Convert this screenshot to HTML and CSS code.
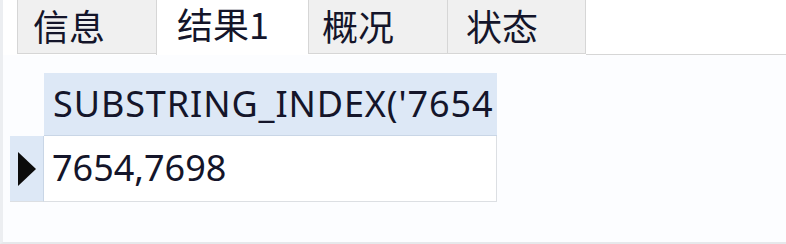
FILE: index.html
```html
<!DOCTYPE html>
<html>
<head>
<meta charset="utf-8">
<link rel="stylesheet" href="styles.css">
</head>
<body>
<div class="window">
  <div class="tabs">
    <div class="tab">信息</div>
    <div class="tab active">结果1</div>
    <div class="tab">概况</div>
    <div class="tab">状态</div>
    <div class="tab-fill"></div>
  </div>
  <div class="content">
    <div class="grid">
      <div class="corner"></div>
      <div class="head">SUBSTRING_INDEX('7654</div>
      <div class="indicator"><span class="arrow"></span></div>
      <div class="cell">7654,7698</div>
    </div>
  </div>
</div>
</body>
</html>
```
FILE: styles.css
```css
html, body {
  margin: 0;
  padding: 0;
  background: #ffffff;
}
.window {
  width: 786px;
  height: 244px;
  box-sizing: border-box;
  border-left: 3px solid #eceef1;
  border-bottom: 2px solid #e6e8eb;
  font-family: "Noto Sans", "Noto Sans CJK SC", sans-serif;
  color: #14152a;
}
.tabs {
  display: flex;
  height: 55px;
  padding-left: 14px;
  box-sizing: border-box;
}
.tab {
  width: 139px;
  height: 54px;
  box-sizing: border-box;
  background: #f0f0f0;
  border-left: 1px solid #d6d6d6;
  border-bottom: 1px solid #d6d6d6;
  font-size: 36px;
  line-height: 50px;
  padding-left: 15px;
  font-family: "Noto Sans CJK SC", sans-serif;
}
.tab.active {
  width: 152px;
  height: 55px;
  background: #ffffff;
  border-bottom: none;
  padding-left: 20px;
  line-height: 46px;
}
.tab.active + .tab {
  border-left: 1px solid #d6d6d6;
}
.tab:nth-child(3) { padding-left: 13px; }
.tab:nth-child(4) { border-right: 1px solid #d6d6d6; width: 139px; padding-left: 18px; }
.tab-fill {
  flex: 1;
  height: 55px;
  box-sizing: border-box;
  border-bottom: 1px solid #d6d6d6;
}
.content {
  background: #fcfdff;
  height: 187px;
  padding-top: 18px;
  padding-left: 7px;
  box-sizing: border-box;
}
.grid {
  display: grid;
  grid-template-columns: 34px 453px;
  grid-template-rows: 63px 66px;
  width: 487px;
}
.head {
  background: #dde8f6;
  border-bottom: 1px solid #c9d6e6;
  font-size: 36px;
  line-height: 62px;
  padding-left: 9px;
  white-space: nowrap;
  overflow: hidden;
  letter-spacing: 0.9px;
}
.indicator {
  background: #dde8f6;
  border-right: 1px solid #c9d6e6;
  border-bottom: 1px solid #dcdfe3;
  display: flex;
  align-items: center;
  padding-left: 8px;
  box-sizing: border-box;
}
.arrow {
  width: 0;
  height: 0;
  border-top: 17px solid transparent;
  border-bottom: 17px solid transparent;
  border-left: 18px solid #0b0b0b;
}
.cell {
  background: #ffffff;
  border-right: 1px solid #dcdfe3;
  border-bottom: 1px solid #dcdfe3;
  font-size: 36px;
  line-height: 64px;
  padding-left: 8px;
  white-space: nowrap;
}
```
